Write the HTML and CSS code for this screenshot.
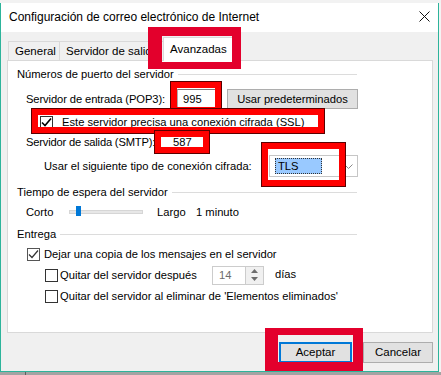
FILE: index.html
```html
<!DOCTYPE html>
<html lang="es">
<head>
    <meta charset="UTF-8">
    <title>Configuración de correo electrónico de Internet</title>
    <link rel="stylesheet" href="styles.css">
</head>
<body>
    <div class="screen">
        <div class="strip-top"></div>

        <div class="dialog">
            <div class="titlebar">
                <span class="title">Configuración de correo electrónico de Internet</span>
                <svg class="close" width="11" height="11" viewBox="0 0 11 11">
                    <path d="M0.5 0.5L10.5 10.5M10.5 0.5L0.5 10.5" stroke="#111" stroke-width="1" fill="none"/>
                </svg>
            </div>

            <div class="content">
                <div class="tabs">
                    <div class="tab first">General</div>
                    <div class="tab">Servidor de salida</div>
                    <div class="tab selected">Avanzadas</div>
                </div>

                <div class="panel">
                    <div class="group">Números de puerto del servidor</div>

                    <div class="row row-pop">
                        <span class="label label-pop">Servidor de entrada (POP3):</span>
                        <span class="field field-pop">995</span>
                        <span class="btn btn-default-port">Usar predeterminados</span>
                    </div>

                    <div class="row row-ssl">
                        <span class="check checked">
                            <svg width="11" height="11" viewBox="0 0 11 11"><path d="M1 5.5L4 8.5L10 1.5" stroke="#000" stroke-width="1.6" fill="none"/></svg>
                        </span>
                        <span class="check-label">Este servidor precisa una conexión cifrada (SSL)</span>
                    </div>

                    <div class="row row-smtp">
                        <span class="label label-smtp">Servidor de salida (SMTP):</span>
                        <span class="field field-smtp">587</span>
                    </div>

                    <div class="row row-tls">
                        <span class="label label-tls">Usar el siguiente tipo de conexión cifrada:</span>
                        <span class="combo">
                            <span class="combo-value">TLS</span>
                            <svg class="combo-arrow" width="9" height="5" viewBox="0 0 9 5"><path d="M0.5 0.5L4.5 4.5L8.5 0.5" stroke="#888" fill="none"/></svg>
                        </span>
                    </div>

                    <div class="group group-time">Tiempo de espera del servidor</div>

                    <div class="row row-slider">
                        <span class="label label-short">Corto</span>
                        <span class="slider"><span class="thumb"></span></span>
                        <span class="label label-long">Largo</span>
                        <span class="label">1 minuto</span>
                    </div>

                    <div class="group group-delivery">Entrega</div>

                    <div class="row row-keep">
                        <span class="check checked light">
                            <svg width="11" height="11" viewBox="0 0 11 11"><path d="M1 5.5L4 8.5L10 1.5" stroke="#333" stroke-width="1.2" fill="none"/></svg>
                        </span>
                        <span class="check-label">Dejar una copia de los mensajes en el servidor</span>
                    </div>

                    <div class="row row-after">
                        <span class="check"></span>
                        <span class="check-label label-after">Quitar del servidor después</span>
                        <span class="spinner">
                            <span class="spinner-value">14</span>
                            <span class="spinner-arrows">
                                <svg width="7" height="4" viewBox="0 0 7 4"><path d="M0 4L3.5 0L7 4Z" fill="#6d6d6d"/></svg>
                                <svg width="7" height="4" viewBox="0 0 7 4"><path d="M0 0L3.5 4L7 0Z" fill="#6d6d6d"/></svg>
                            </span>
                        </span>
                        <span class="days">días</span>
                    </div>

                    <div class="row row-deleted">
                        <span class="check"></span>
                        <span class="check-label">Quitar del servidor al eliminar de 'Elementos eliminados'</span>
                    </div>
                </div>

                <div class="buttons">
                    <span class="btn btn-ok">Aceptar</span>
                    <span class="btn btn-cancel">Cancelar</span>
                </div>
            </div>
        </div>

        <div class="strip-bottom"></div>

        <!-- annotations drawn on top of the screenshot -->
        <div class="mark mark-tab"></div>
        <div class="mark mark-ok"></div>
        <div class="mark bright mark-pop"></div>
        <div class="mark bright mark-ssl"></div>
        <div class="mark bright mark-smtp"></div>
        <div class="mark bright mark-tls"></div>
    </div>
</body>
</html>
```

FILE: styles.css
```css
body {
    margin: 0;
    font-family: "Liberation Sans", Arial, sans-serif;
    font-size: 11.2px;
    color: #000;
}

.screen {
    position: relative;
    width: 441px;
    height: 375px;
    overflow: hidden;
    background: #f4f4f4;
}

.strip-top {
    height: 3px;
    background: #f2f2f2;
}

.strip-bottom {
    height: 3px;
    background: linear-gradient(to right, #a3a3a3 25px, #5e5e5e 25px, #5e5e5e 26px, #a3a3a3 26px);
}

.dialog {
    width: 437px;
    border-left: 1px solid #2db49b;
    border-right: 1px solid #2db49b;
    border-bottom: 1px solid #2db49b;
}

.titlebar {
    display: flex;
    align-items: center;
    height: 29px;
    padding-left: 8px;
    background: #fff;
}

.title {
    font-size: 12px;
    margin-top: -1px;
}

.close {
    margin-left: auto;
    margin-right: 8px;
    margin-top: -3px;
}

.content {
    height: 339px;
    box-sizing: border-box;
    padding: 5px 5px 0 6px;
    background: #f0f0f0;
}

/* tabs */
.tabs {
    display: flex;
    align-items: flex-end;
    height: 23px;
}

.tab {
    height: 19px;
    box-sizing: border-box;
    border: 1px solid #d9d9d9;
    border-bottom: none;
    border-left: none;
    background: #f0f0f0;
    padding: 0 6px;
    line-height: 18px;
    text-align: center;
    font-size: 11.5px;
}

.tab.first {
    margin-left: 1px;
    border-left: 1px solid #d9d9d9;
    width: 52px;
}

.tab.selected {
    position: relative;
    z-index: 1;
    height: 24px;
    width: 70px;
    margin-left: -2px;
    margin-bottom: -1px;
    border-left: 1px solid #d9d9d9;
    background: #fff;
    line-height: 22px;
}

.panel {
    width: 426px;
    height: 273px;
    box-sizing: border-box;
    border: 1px solid #d9d9d9;
    background: #fff;
    padding: 5px 0 0 9px;
}

/* group headers */
.group {
    display: flex;
    align-items: center;
    width: 340px;
    height: 16px;
}

.group::after {
    content: "";
    flex: 1;
    height: 1px;
    margin-left: 4px;
    background: #dcdcdc;
}

.group-time {
    margin-top: 7px;
}

.group-delivery {
    margin-top: 5px;
}

/* rows */
.row {
    display: flex;
    align-items: center;
    padding-left: 9px;
}

.label {
    white-space: nowrap;
}

.row-pop {
    height: 20px;
    margin-top: 7px;
}

.label-pop {
    width: 151px;
    letter-spacing: -0.1px;
}

.field {
    height: 20px;
    box-sizing: border-box;
    border: 1px solid #adadad;
    border-top-color: #7a7a7a;
    background: #fff;
    line-height: 18px;
}

.field-pop {
    width: 41px;
    padding-left: 5px;
}

.btn {
    display: inline-block;
    height: 20px;
    box-sizing: border-box;
    border: 1px solid #adadad;
    background: #e1e1e1;
    text-align: center;
    line-height: 18px;
}

.btn-default-port {
    width: 131px;
    margin-left: 9px;
}

.row-ssl {
    height: 20px;
    margin-top: 3px;
    padding-left: 23px;
}

.check {
    display: flex;
    align-items: center;
    justify-content: center;
    width: 13px;
    height: 13px;
    box-sizing: border-box;
    border: 1px solid #333;
    background: #fff;
}

.check-label {
    margin-left: 9px;
    white-space: nowrap;
}

.row-smtp {
    height: 18px;
    margin-top: 1px;
}

.label-smtp {
    width: 134px;
    letter-spacing: -0.2px;
}

.field-smtp {
    width: 45px;
    height: 18px;
    line-height: 16px;
    padding-left: 12px;
}

.row-tls {
    height: 22px;
    margin-top: 4px;
    padding-left: 27px;
}

.label-tls {
    width: 225px;
}

.combo {
    display: flex;
    align-items: center;
    width: 89px;
    height: 22px;
    box-sizing: border-box;
    border: 1px solid #c6c6c6;
    background: #fff;
    padding-left: 5px;
}

.combo-value {
    width: 47px;
    height: 16px;
    box-sizing: border-box;
    border: 1px dotted #333;
    background: #99c9ff;
    padding-left: 2px;
    line-height: 14px;
}

.combo-arrow {
    margin-left: auto;
    margin-right: 4px;
}

.row-slider {
    height: 18px;
    margin-top: 3px;
}

.label-short {
    width: 43px;
}

.slider {
    position: relative;
    width: 74px;
    height: 4px;
    box-sizing: border-box;
    border: 1px solid #d6d6d6;
    background: #e7e7e7;
}

.thumb {
    position: absolute;
    left: 6px;
    top: -5px;
    width: 5px;
    height: 10px;
    background: #0078d7;
}

.label-long {
    width: 39px;
    margin-left: 14px;
}

.row-keep {
    height: 18px;
    margin-top: 3px;
    padding-left: 10px;
}

.row-keep .check-label {
    margin-left: 4px;
}

.check.light {
    border-color: #555;
}

.row-after {
    height: 20px;
    margin-top: 2px;
    padding-left: 28px;
}

.row-after .check-label,
.row-deleted .check-label {
    margin-left: 2px;
}

.label-after {
    width: 152px;
}

.spinner {
    display: flex;
    width: 52px;
    height: 19px;
    box-sizing: border-box;
    border: 1px solid #cccccc;
    background: #fff;
}

.spinner-value {
    flex: 1;
    padding-left: 6px;
    color: #6d6d6d;
    line-height: 17px;
}

.spinner-arrows {
    display: flex;
    flex-direction: column;
    justify-content: space-around;
    align-items: center;
    width: 17px;
    border-left: 1px solid #cccccc;
    background: #f0f0f0;
}

.days {
    margin-left: 11px;
    margin-top: -3px;
}

.row-deleted {
    height: 18px;
    margin-top: 2px;
    padding-left: 28px;
}

/* dialog buttons */
.buttons {
    display: flex;
    justify-content: flex-end;
    margin-top: 9px;
}

.btn-ok {
    width: 73px;
    height: 21px;
    border: 2px solid #0078d7;
    line-height: 17px;
    font-size: 11.5px;
}

.btn-cancel {
    width: 70px;
    height: 21px;
    margin-left: 11px;
    line-height: 19px;
    font-size: 11.5px;
}

/* red annotation boxes */
.mark {
    position: absolute;
    box-sizing: border-box;
    border: 8px solid #e3002c;
    z-index: 5;
}

.mark.bright {
    border: 6px solid #ff0000;
    box-shadow: 0 0 0 1px #5a0000;
}

.mark-tab {
    left: 148px;
    top: 27px;
    width: 93px;
    height: 42px;
    border-width: 9px 9px 7px 14px;
}

.mark-ok {
    left: 265px;
    top: 328px;
    width: 98px;
    height: 43px;
    border-width: 7px 10px 9px 13px;
}

.mark-pop {
    left: 171px;
    top: 82px;
    width: 50px;
    height: 31px;
}

.mark-ssl {
    left: 32px;
    top: 109px;
    width: 292px;
    height: 24px;
}

.mark-smtp {
    left: 155px;
    top: 131px;
    width: 54px;
    height: 22px;
    border-width: 5px;
}

.mark-tls {
    left: 262px;
    top: 143px;
    width: 83px;
    height: 43px;
    border-width: 7px;
}
```
